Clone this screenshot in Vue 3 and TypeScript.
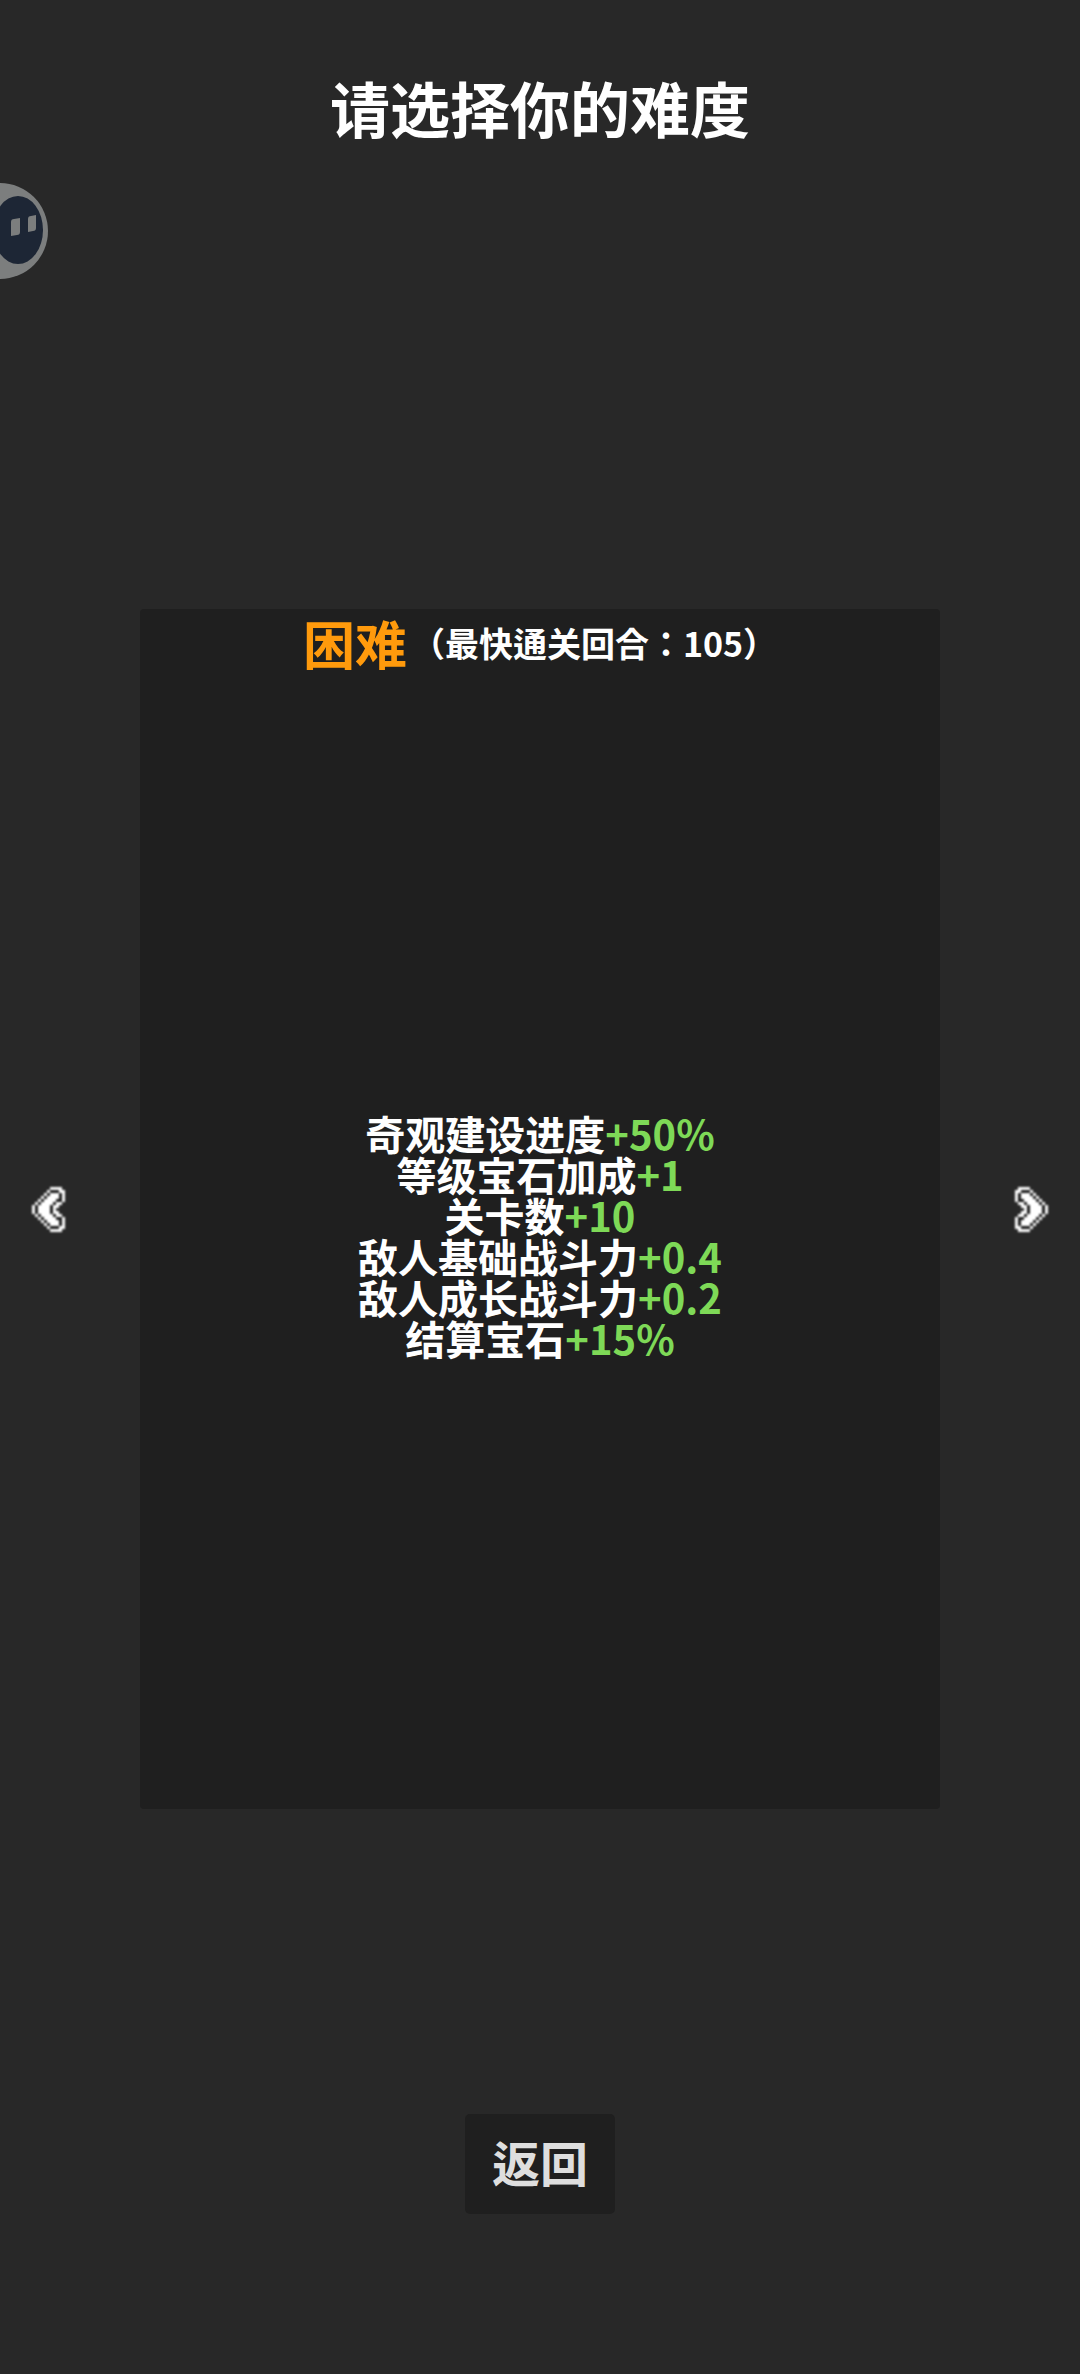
<script setup lang="ts">
import { computed, ref } from 'vue'

interface Effect {
  label: string
  value: string
}

interface Difficulty {
  name: string
  bestRound: number
  effects: Effect[]
}

const difficulties: Difficulty[] = [
  {
    name: '困难',
    bestRound: 105,
    effects: [
      { label: '奇观建设进度', value: '+50%' },
      { label: '等级宝石加成', value: '+1' },
      { label: '关卡数', value: '+10' },
      { label: '敌人基础战斗力', value: '+0.4' },
      { label: '敌人成长战斗力', value: '+0.2' },
      { label: '结算宝石', value: '+15%' },
    ],
  },
]

const index = ref(0)
const current = computed(() => difficulties[index.value])

function step(delta: number) {
  index.value = (index.value + delta + difficulties.length) % difficulties.length
}

// Pixel-art chevron: '#' is a white pixel, 'o' is a dark outline pixel.
const chevron = [
  '......####.',
  '.....#ooo##',
  '....#o###o#',
  '...#o####o#',
  '..#o####oo#',
  '.#o####o##.',
  '#o####o##..',
  '#o####o#...',
  '#o####o##..',
  '.#o####o##.',
  '..#o####oo#',
  '...#o####o#',
  '....#o###o#',
  '.....#ooo##',
  '......####.',
]

const pixels = chevron.flatMap((row, y) =>
  [...row].flatMap((c, x) => (c === '.' ? [] : [{ x, y, fill: c === '#' ? '#ffffff' : '#181818' }])),
)
</script>

<template>
  <main class="page">
    <h1 class="title">请选择你的难度</h1>

    <button class="assist" type="button" aria-label="悬浮助手">
      <svg width="48" height="96" viewBox="0 0 48 96" aria-hidden="true">
        <circle cx="0" cy="48" r="48" fill="#7c7e7e" />
        <ellipse cx="18" cy="47" rx="25" ry="34" fill="#1d2635" />
        <path d="M11 39q0-3 3-3l6-1v14q0 3-3 3l-6 1z" fill="#7c7e7e" />
        <path d="M28 36q0-3 3-3l5-1v13q0 3-3 3l-5 1z" fill="#7c7e7e" />
      </svg>
    </button>

    <section class="chooser">
      <button class="arrow" type="button" aria-label="上一个难度" @click="step(-1)">
        <svg class="chevron" viewBox="0 0 11 15" shape-rendering="crispEdges" aria-hidden="true">
          <rect v-for="p in pixels" :key="`${p.x}-${p.y}`" :x="p.x" :y="p.y" width="1" height="1" :fill="p.fill" />
        </svg>
      </button>

      <article class="card">
        <header class="card-head">
          <h2 class="name">{{ current.name }}</h2>
          <span class="best">（最快通关回合：{{ current.bestRound }}）</span>
        </header>
        <ul class="effects">
          <li v-for="e in current.effects" :key="e.label">{{ e.label }}<span class="value">{{ e.value }}</span></li>
        </ul>
      </article>

      <button class="arrow" type="button" aria-label="下一个难度" @click="step(1)">
        <svg class="chevron flip" viewBox="0 0 11 15" shape-rendering="crispEdges" aria-hidden="true">
          <rect v-for="p in pixels" :key="`${p.x}-${p.y}`" :x="p.x" :y="p.y" width="1" height="1" :fill="p.fill" />
        </svg>
      </button>
    </section>

    <footer class="foot">
      <button class="back" type="button">返回</button>
    </footer>
  </main>
</template>

<style>
body {
  margin: 0;
  background: #282828;
}
</style>

<style scoped>
.page {
  position: relative;
  box-sizing: border-box;
  min-height: 100vh;
  padding: 63px 0 160px;
  display: flex;
  flex-direction: column;
  background: #282828;
  color: #fff;
  font-family: 'Noto Sans CJK KR', 'Noto Sans CJK SC', sans-serif;
  font-weight: 700;
}

button {
  padding: 0;
  border: 0;
  background: none;
  font-family: inherit;
  cursor: pointer;
}

.title {
  margin: 0;
  font-size: 60px;
  line-height: 88px;
  text-align: center;
}

.assist {
  position: absolute;
  left: 0;
  top: 183px;
  display: flex;
}

.chooser {
  flex: 1;
  display: flex;
  align-items: center;
  padding-top: 201px;
  padding-bottom: 48px;
}

.arrow {
  flex: 1;
  display: flex;
  align-items: center;
  padding: 20px 32px;
}

.arrow:last-child {
  justify-content: flex-end;
}

.chevron {
  width: 33px;
  height: 45px;
  filter: blur(1px);
}

.flip {
  transform: scaleX(-1);
}

.card {
  width: 74%;
  min-height: 1200px;
  display: flex;
  flex-direction: column;
  border-radius: 4px;
  background: #1f1f1f;
}

.card-head {
  display: flex;
  align-items: center;
  justify-content: center;
  gap: 4px;
  height: 68px;
}

.name {
  margin: 0;
  font-size: 52px;
  line-height: 68px;
  color: #ff9a0c;
}

.best {
  font-size: 34px;
  line-height: 68px;
}

.effects {
  flex: 1;
  margin: 0;
  padding: 0 0 14px;
  list-style: none;
  display: flex;
  flex-direction: column;
  justify-content: center;
  text-align: center;
  font-size: 40px;
  line-height: 41px;
}

.value {
  color: #7ed957;
}

.foot {
  display: flex;
  justify-content: center;
}

.back {
  padding: 0 27px 6px;
  border-radius: 5px;
  background: #1f1f1f;
  color: #dedede;
  font-size: 48px;
  line-height: 94px;
  font-weight: 700;
}
</style>
